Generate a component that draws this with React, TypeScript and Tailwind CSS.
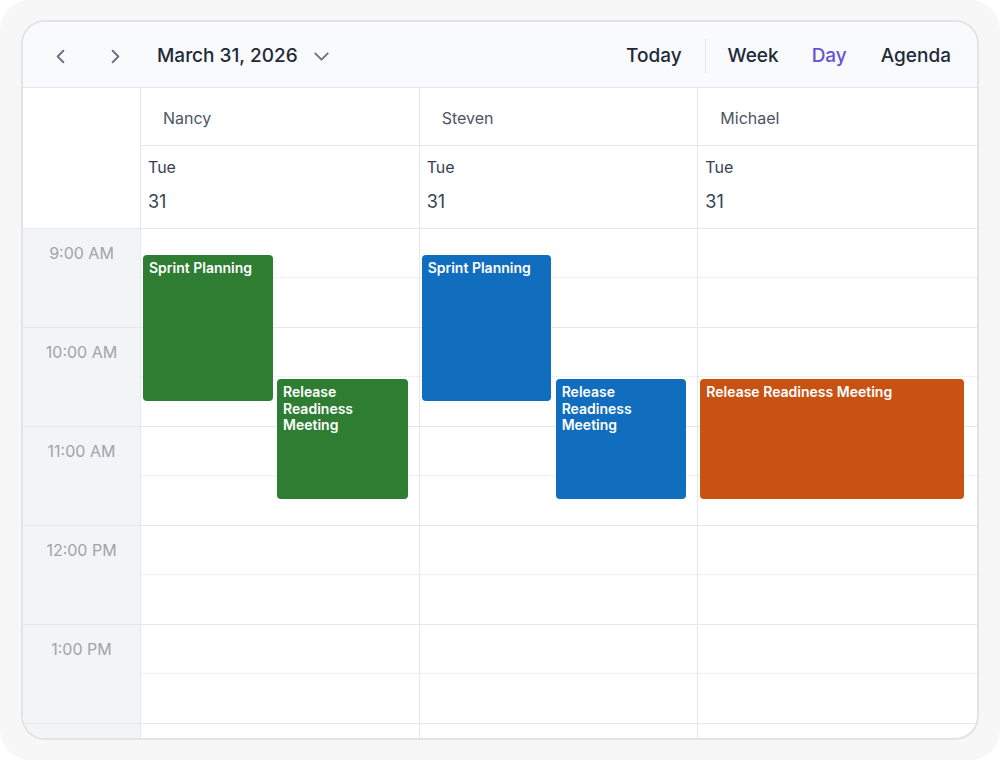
import React from "react";
import { ChevronLeft, ChevronRight, ChevronDown } from "lucide-react";

type Ev = { title: string; top: number; height: number; left: number; width: number; color: string };

const resources: { name: string; events: Ev[] }[] = [
  {
    name: "Nancy",
    events: [
      { title: "Sprint Planning", top: 26, height: 146, left: 2, width: 130, color: "bg-[#2e7d32]" },
      { title: "Release Readiness Meeting", top: 150, height: 120, left: 136, width: 131, color: "bg-[#2e7d32]" },
    ],
  },
  {
    name: "Steven",
    events: [
      { title: "Sprint Planning", top: 26, height: 146, left: 2, width: 129, color: "bg-[#116dbd]" },
      { title: "Release Readiness Meeting", top: 150, height: 120, left: 136, width: 130, color: "bg-[#116dbd]" },
    ],
  },
  {
    name: "Michael",
    events: [
      { title: "Release Readiness Meeting", top: 150, height: 120, left: 2, width: 264, color: "bg-[#c75214]" },
    ],
  },
];

const hours = ["9:00 AM", "10:00 AM", "11:00 AM", "12:00 PM", "1:00 PM", ""];

export default function App() {
  return (
    <div className="w-[1000px] h-[760px] bg-white" style={{ fontFamily: "Inter, 'Noto Sans', sans-serif" }}>
      <div className="w-[1000px] h-[760px] bg-[#f7f7f8] rounded-[30px] pt-[20px] pl-[21px]">
        <div className="w-[958px] h-[720px] border-2 border-[#e3e3e6] rounded-[24px] bg-white overflow-hidden flex flex-col">
          {/* Toolbar */}
          <div className="h-[66px] shrink-0 bg-[#f8fafc] border-b border-[#e5e7eb] flex items-center pt-[3px]">
            <button className="ml-[19px] w-[36px] h-[36px] flex items-center justify-center text-[#6b7280]">
              <ChevronLeft size={23} strokeWidth={2} />
            </button>
            <button className="ml-[19px] w-[36px] h-[36px] flex items-center justify-center text-[#6b7280]">
              <ChevronRight size={23} strokeWidth={2} />
            </button>
            <div className="ml-[24px] flex items-center text-[19px] font-medium text-[#1f2937]">
              <span>March 31, 2026</span>
              <ChevronDown size={25} strokeWidth={1.8} className="ml-[11px] text-[#6b7280]" />
            </div>
            <div className="ml-auto flex items-center text-[19px] font-medium text-[#1f2937] mr-[26px]">
              <span>Today</span>
              <div className="ml-[23px] w-px h-[34px] bg-[#e5e7eb]" />
              <span className="ml-[22px]">Week</span>
              <span className="ml-[33px] text-[#6452d6]">Day</span>
              <span className="ml-[34px]">Agenda</span>
            </div>
          </div>

          {/* Resource header */}
          <div className="grid grid-cols-[118px_1fr_1fr_1fr] shrink-0">
            <div className="border-r border-b border-[#e5e7eb] bg-white" />
            {resources.map((r, i) => (
              <div key={r.name} className={`border-b border-[#e5e7eb] ${i < 2 ? "border-r" : ""}`}>
                <div className="h-[58px] border-b border-[#e5e7eb] flex items-center pl-[22px] pt-[2px] text-[16px] text-[#4b5563]">
                  {r.name}
                </div>
                <div className="h-[82px] pl-[7px] pt-[10px] text-[#374151]">
                  <div className="text-[16px] leading-[22px]">Tue</div>
                  <div className="text-[18px] leading-[24px] mt-[12px]">31</div>
                </div>
              </div>
            ))}
          </div>

          {/* Body */}
          <div className="grid grid-cols-[118px_1fr_1fr_1fr] flex-1 overflow-hidden">
            <div className="bg-[#f3f4f6] border-r border-[#e5e7eb]">
              {hours.map((h, k) => (
                <div key={k} className="h-[99px] border-b border-[#e5e7eb] flex justify-center pt-[12px] text-[16px] text-[#a0a4ab]">
                  {h}
                </div>
              ))}
            </div>
            {resources.map((r, i) => (
              <div key={r.name} className={`relative border-[#e5e7eb] ${i < 2 ? "border-r" : ""}`}>
                {hours.map((h, k) => (
                  <div key={k} className="h-[99px] border-b border-[#e5e7eb]">
                    <div className="h-[49px] border-b border-dotted border-[#e5e7eb]" />
                  </div>
                ))}
                {r.events.map((e, j) => (
                  <div
                    key={j}
                    className={`absolute ${e.color} rounded-[4px] px-[6px] pt-[5px] text-white text-[14px] font-semibold leading-[16.5px]`}
                    style={{ top: e.top, height: e.height, left: e.left, width: e.width }}
                  >
                    {e.title}
                  </div>
                ))}
              </div>
            ))}
          </div>
        </div>
      </div>
    </div>
  );
}
